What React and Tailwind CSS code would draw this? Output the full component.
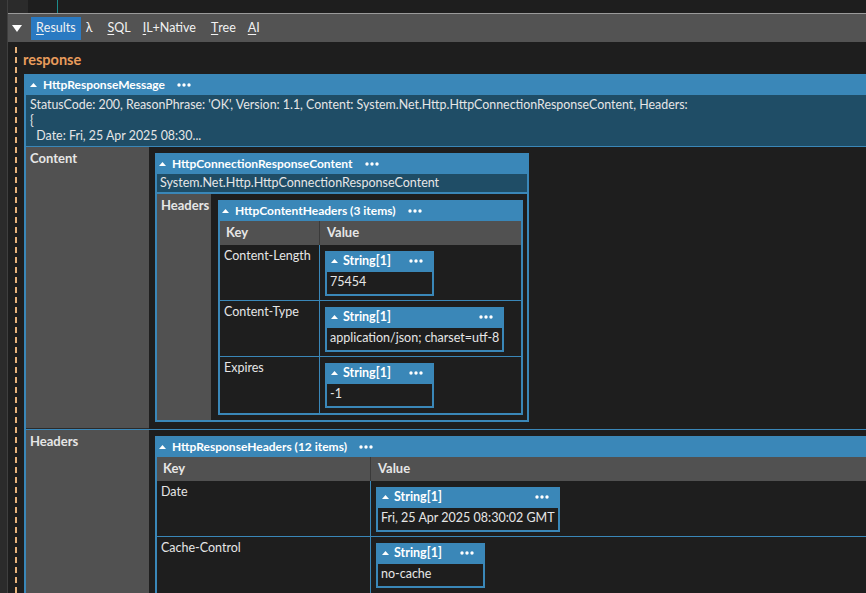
import React from 'react'

const font = "font-['Lato',sans-serif]"

function Caret() {
  return (
    <svg width="7" height="4" viewBox="0 0 7 4" className="shrink-0">
      <polygon points="0,4 3.5,0 7,4" fill="#ffffff" />
    </svg>
  )
}

function Dots() {
  return (
    <svg width="14" height="4" viewBox="0 0 14 4" className="shrink-0">
      <circle cx="2" cy="2" r="1.7" fill="#ffffff" />
      <circle cx="7" cy="2" r="1.7" fill="#ffffff" />
      <circle cx="12" cy="2" r="1.7" fill="#ffffff" />
    </svg>
  )
}

function PanelHeader({ title }) {
  return (
    <div className="flex h-[21px] shrink-0 items-center bg-[#3a87b8] pl-[4px] pr-[10px]">
      <Caret />
      <span className="ml-[6px] whitespace-nowrap text-[12px] font-bold text-white">{title}</span>
      <span className="ml-[12px]">
        <Dots />
      </span>
    </div>
  )
}

function StringBox({ value }) {
  return (
    <div className="inline-flex w-fit min-w-[109px] flex-col border-2 border-t-0 border-[#3a87b8] bg-[#1e1e1e]">
      <div className="-mx-[2px] flex h-[21px] items-center bg-[#3a87b8] pl-[6px] pr-[11px]">
        <Caret />
        <span className="ml-[5px] whitespace-nowrap text-[12.5px] font-bold text-white">String[1]</span>
        <span className="ml-auto pl-[16px]">
          <Dots />
        </span>
      </div>
      <div className="flex h-[22px] items-center whitespace-nowrap px-[3px] text-[12.5px] text-[#e6e6e6]">{value}</div>
    </div>
  )
}

function KeyValueTable({ keyWidth, rows }) {
  return (
    <div className="flex flex-col">
      <div className="flex h-[24px] bg-[#515151] text-[13px] font-bold text-[#e6e6e6]">
        <div className="flex shrink-0 items-center border-r border-[#3a3a3a] pl-[6px]" style={{ width: keyWidth }}>
          Key
        </div>
        <div className="flex items-center pl-[7px]">Value</div>
      </div>
      {rows.map((row, i) => (
        <div
          key={row.k}
          className={`flex h-[56px] text-[12.5px] text-[#e6e6e6] ${i < rows.length - 1 ? 'border-b border-[#3a87b8]' : ''}`}
        >
          <div className="shrink-0 border-r border-[#3a87b8] pl-[4px] pt-[2px]" style={{ width: keyWidth }}>
            {row.k}
          </div>
          <div className="pl-[5px] pt-[5px]">
            <StringBox value={row.v} />
          </div>
        </div>
      ))}
    </div>
  )
}

function Toolbar() {
  const tabs = [
    { key: 'results', first: 'R', rest: 'esults', active: true, mr: 'mr-0' },
    { key: 'lambda', first: '', rest: 'λ', mr: 'mr-[5px]' },
    { key: 'sql', first: 'S', rest: 'QL', mr: 'mr-[2px]' },
    { key: 'il', first: 'I', rest: 'L+Native', mr: 'mr-[5px]' },
    { key: 'tree', first: 'T', rest: 'ree', mr: 'mr-[2px]' },
    { key: 'ai', first: 'A', rest: 'I', mr: 'mr-0' },
  ]
  return (
    <div className="flex h-[28px] shrink-0 items-center bg-[#535353] pl-[4px]">
      <svg width="10" height="7" viewBox="0 0 10 7" className="mr-[9px]">
        <polygon points="0,0 10,0 5,7" fill="#ffffff" />
      </svg>
      {tabs.map((t) => (
        <div
          key={t.key}
          className={`flex h-[23px] items-center px-[5px] text-[12.5px] text-[#f2f2f2] ${t.active ? 'bg-[#2a7ac2]' : ''} ${t.mr}`}
        >
          {t.first ? <span className="underline underline-offset-2">{t.first}</span> : null}
          {t.rest}
        </div>
      ))}
    </div>
  )
}

export default function App() {
  return (
    <div className={`flex h-[593px] w-[866px] overflow-hidden bg-[#1e1e1e] ${font}`}>
      <div className="w-[8px] shrink-0 border-r border-[#3f3f3f] bg-[#2b2b2b]" />
      <div className="flex min-w-0 flex-1 flex-col">
        <div className="flex h-[14px] shrink-0 border-b border-[#9a9a9a]">
          <div className="w-[20px] bg-[#2b2b2b]" />
          <div className="w-[29px]" />
          <div className="w-px bg-[#1d8c8c]" />
        </div>
        <Toolbar />
        <div className="flex min-h-0 flex-1 pt-[5px]">
          <div className="ml-[7px] w-[2px] shrink-0 bg-[repeating-linear-gradient(to_bottom,#e8b27a_0_6px,transparent_6px_10px)]" />
          <div className="ml-[6px] flex flex-col">
            <div className="h-[27px] shrink-0 pt-[2px] text-[14.5px] font-bold text-[#e89c5c]">response</div>
            <div className="ml-[1px] flex w-[1100px] shrink-0 flex-col border-l-2 border-[#3a87b8]">
              <PanelHeader title="HttpResponseMessage" />
              <div className="h-[52px] whitespace-pre border-b border-[#3a87b8] bg-[#1f4d66] px-[4px] pt-[2px] text-[12.4px] leading-[15.5px] text-[#e6e6e6]">
                {"StatusCode: 200, ReasonPhrase: 'OK', Version: 1.1, Content: System.Net.Http.HttpConnectionResponseContent, Headers:\n{\n  Date: Fri, 25 Apr 2025 08:30..."}
              </div>
              <div className="flex h-[283px] border-b border-[#3a87b8]">
                <div className="w-[123px] shrink-0 border-b border-[#2a2a2a] bg-[#515151] pl-[4px] pt-[2px] text-[13px] font-bold text-[#e6e6e6]">
                  Content
                </div>
                <div className="pl-[6px] pt-[6px]">
                  <div className="flex w-[374px] flex-col border-2 border-t-0 border-[#3a87b8]">
                    <div className="-mx-[2px]">
                      <PanelHeader title="HttpConnectionResponseContent" />
                    </div>
                    <div className="h-[20px] border-b-2 border-[#3a87b8] bg-[#1f4d66] pl-[3px] text-[12.5px] leading-[18px] text-[#e6e6e6]">
                      System.Net.Http.HttpConnectionResponseContent
                    </div>
                    <div className="flex">
                      <div className="w-[54px] shrink-0 bg-[#515151] pl-[4px] pt-[2px] text-[13px] font-bold text-[#e6e6e6]">
                        Headers
                      </div>
                      <div className="pb-[5px] pl-[7px] pt-[6px]">
                        <div className="flex w-[305px] flex-col border-2 border-t-0 border-[#3a87b8]">
                          <div className="-mx-[2px]">
                            <PanelHeader title="HttpContentHeaders (3 items)" />
                          </div>
                          <KeyValueTable
                            keyWidth={100}
                            rows={[
                              { k: 'Content-Length', v: '75454' },
                              { k: 'Content-Type', v: 'application/json; charset=utf-8' },
                              { k: 'Expires', v: '-1' },
                            ]}
                          />
                        </div>
                      </div>
                    </div>
                  </div>
                </div>
              </div>
              <div className="flex h-[200px]">
                <div className="w-[123px] shrink-0 bg-[#515151] pl-[4px] pt-[2px] text-[13px] font-bold text-[#e6e6e6]">
                  Headers
                </div>
                <div className="pl-[6px] pt-[6px]">
                  <div className="flex w-[800px] flex-col border-l-2 border-[#3a87b8]">
                    <div className="-ml-[2px]">
                      <PanelHeader title="HttpResponseHeaders (12 items)" />
                    </div>
                    <KeyValueTable
                      keyWidth={214}
                      rows={[
                        { k: 'Date', v: 'Fri, 25 Apr 2025 08:30:02 GMT' },
                        { k: 'Cache-Control', v: 'no-cache' },
                      ]}
                    />
                  </div>
                </div>
              </div>
            </div>
          </div>
        </div>
      </div>
    </div>
  )
}
